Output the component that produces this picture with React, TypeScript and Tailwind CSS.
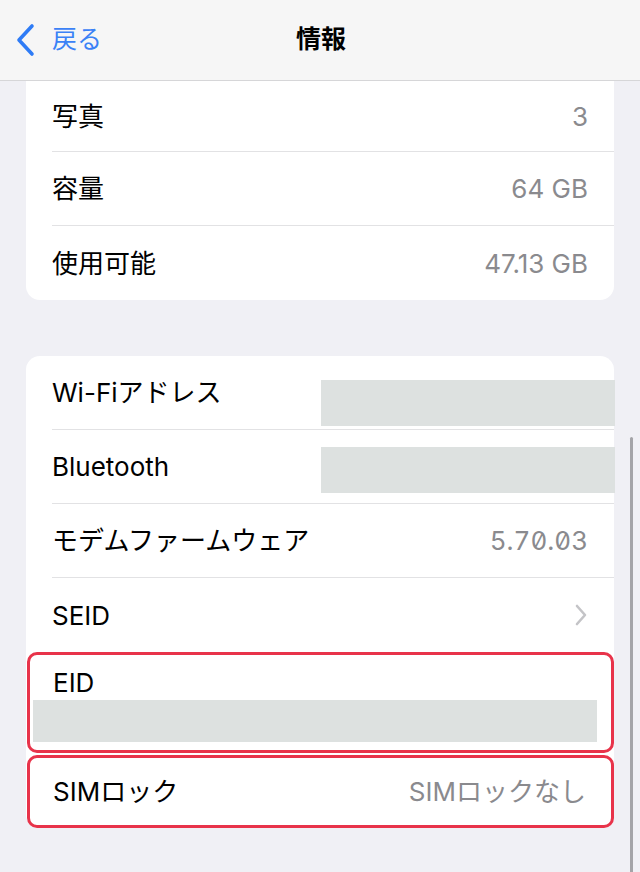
const FONT = "font-['Inter','Noto_Sans_CJK_JP',sans-serif]";

function Row({
  label,
  value,
  last = false,
  children,
}: {
  label: string;
  value?: string;
  last?: boolean;
  children?: React.ReactNode;
}) {
  return (
    <div className="pl-[26px]">
      <div
        className={`flex h-[74px] items-center pr-[26px] ${
          last ? "" : "border-b border-[#e2e2e4]"
        }`}
      >
        <span className="flex-1 text-[26px] text-black">{label}</span>
        {value && <span className="text-[26px] text-[#8a8a8e]">{value}</span>}
        {children}
      </div>
    </div>
  );
}

function Redacted({ offset }: { offset: string }) {
  return <div className={`-mr-[27px] h-[46px] w-[294px] self-start bg-[#dde1e0] ${offset}`} />;
}

export default function App() {
  return (
    <div className={`relative h-[872px] w-[640px] overflow-hidden bg-[#f0f0f5] ${FONT}`}>
      {/* Nav bar */}
      <div className="grid h-[81px] grid-cols-[1fr_auto_1fr] items-center border-b border-[#d6d6d8] bg-[#f6f6f6] px-[14px]">
        <div className="flex items-center gap-[16px] text-[#3b82f6]">
          <svg width="22" height="34" viewBox="0 0 22 34" fill="none">
            <path
              d="M18 3 L5 17 L18 31"
              stroke="#2f7cf6"
              strokeWidth="3.6"
              strokeLinecap="round"
              strokeLinejoin="round"
            />
          </svg>
          <span className="text-[25px]">戻る</span>
        </div>
        <div className="pl-[2px] text-[25px] font-semibold text-black">情報</div>
        <div />
      </div>

      {/* Storage card */}
      <div className="mx-[26px] rounded-b-[14px] bg-white">
        <div className="pl-[26px]">
          <div className="flex h-[71px] items-center border-b border-[#e2e2e4] pr-[26px]">
            <span className="flex-1 text-[26px]">写真</span>
            <span className="text-[26px] text-[#8a8a8e]">3</span>
          </div>
        </div>
        <Row label="容量" value="64 GB" />
        <Row label="使用可能" value="47.13 GB" last />
      </div>

      {/* Network card */}
      <div className="mx-[26px] mt-[56px] rounded-[14px] bg-white">
        <Row label="Wi-Fiアドレス">
          <Redacted offset="mt-[24px]" />
        </Row>
        <Row label="Bluetooth">
          <Redacted offset="mt-[17px]" />
        </Row>
        <div className="pl-[26px]">
          <div className="flex h-[74px] items-center border-b border-[#e2e2e4] pr-[26px]">
            <span className="flex-1 text-[26px]">モデムファームウェア</span>
            <span className="text-[26px] tabular-nums slashed-zero text-[#8a8a8e]">5.70.03</span>
          </div>
        </div>
        <div className="pl-[26px]">
          <div className="flex h-[74px] items-center pr-[26px]">
            <span className="flex-1 text-[26px]">SEID</span>
            <svg width="14" height="22" viewBox="0 0 14 22" fill="none">
              <path
                d="M3 2 L11 11 L3 20"
                stroke="#c4c4c7"
                strokeWidth="2.6"
                strokeLinecap="round"
                strokeLinejoin="round"
              />
            </svg>
          </div>
        </div>

        {/* EID highlighted */}
        <div className="ml-[1px] rounded-[10px] border-[3px] border-[#e8334a] pb-[8px] pt-[12px]">
          <div className="pl-[23px] text-[26px] leading-[32px]">EID</div>
          <div className="ml-[3px] mr-[14px] mt-[1px] h-[42px] bg-[#dde1e0]" />
        </div>

        {/* SIM lock highlighted */}
        <div className="ml-[1px] mt-[2px] flex h-[73px] items-center rounded-[10px] border-[3px] border-[#e8334a] pl-[23px] pr-[25px]">
          <span className="flex-1 text-[26px]">SIMロック</span>
          <span className="text-[26px] text-[#8a8a8e]">SIMロックなし</span>
        </div>
      </div>

      {/* Scroll indicator */}
      <div className="absolute left-[630px] top-[437px] h-[460px] w-[3px] rounded-full bg-[#a4a4a8]" />
    </div>
  );
}
